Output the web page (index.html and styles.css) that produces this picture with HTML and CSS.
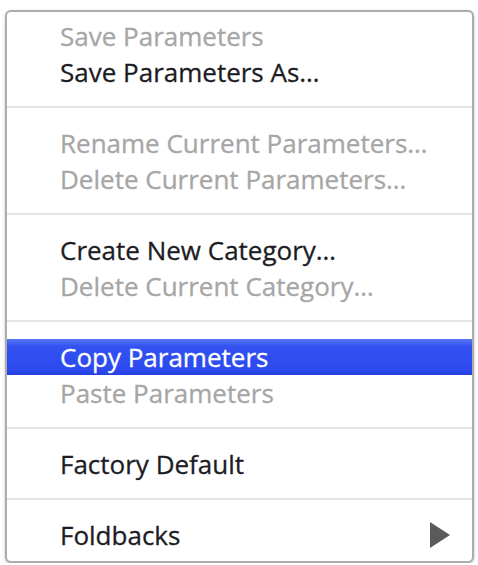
FILE: index.html
```html
<!DOCTYPE html>
<html>
<head>
<meta charset="utf-8">
<link rel="stylesheet" href="styles.css">
</head>
<body>
<div class="menu">
  <div class="item disabled">Save Parameters</div>
  <div class="item">Save Parameters As…</div>
  <div class="sep"></div>
  <div class="item disabled">Rename Current Parameters…</div>
  <div class="item disabled">Delete Current Parameters…</div>
  <div class="sep"></div>
  <div class="item">Create New Category…</div>
  <div class="item disabled">Delete Current Category…</div>
  <div class="sep"></div>
  <div class="item selected">Copy Parameters</div>
  <div class="item disabled">Paste Parameters</div>
  <div class="sep"></div>
  <div class="item">Factory Default</div>
  <div class="sep"></div>
  <div class="item submenu">
    <span>Foldbacks</span>
    <svg class="arrow" width="20" height="26" viewBox="0 0 20 26"><polygon points="0,0 20,13 0,26" fill="#5a5a5a"/></svg>
  </div>
</div>
</body>
</html>
```

FILE: styles.css
```css
html, body {
  margin: 0;
  padding: 0;
  background: #ffffff;
}

body {
  padding: 10px 4px 0 5px;
  font-family: "Open Sans", "Noto Sans", sans-serif;
}

.menu {
  box-sizing: border-box;
  width: 469px;
  border: 2px solid #acacac;
  border-radius: 6px;
  background: #ffffff;
  padding: 6px 0 8px;
  box-shadow: 0 1px 3px rgba(0, 0, 0, 0.25);
}

.item {
  height: 36px;
  display: flex;
  align-items: center;
  padding-left: 53px;
  padding-right: 22px;
  font-size: 26px;
  color: #1c1c24;
  -webkit-text-stroke: 0.3px currentColor;
  white-space: nowrap;
}

.item.disabled {
  color: #a6a6a6;
}

.item.selected {
  color: #ffffff;
  background: linear-gradient(#5a78f6, #3352f1 20%, #2c4aef 85%, #2540e0);
}

.item.submenu {
  justify-content: space-between;
}

.sep {
  height: 2px;
  background: #e4e4e4;
  margin: 16px 0 17px;
}
```
